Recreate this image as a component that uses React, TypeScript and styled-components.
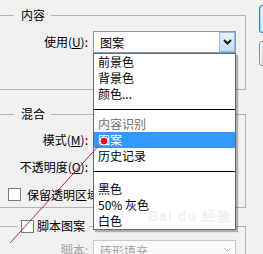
import { type ReactElement } from 'react';
import styled, { createGlobalStyle } from 'styled-components';

const GlobalStyle = createGlobalStyle`
  html, body {
    margin: 0;
    padding: 0;
  }
  body {
    background: #f0f0f0;
    font-family: "Noto Sans CJK SC", "Liberation Sans", sans-serif;
    font-size: 12px;
    color: #000;
  }
`;

const Dialog = styled.div`
  position: relative;
  display: flex;
  align-items: flex-start;
  gap: 13px;
  width: 263px;
  height: 254px;
  overflow: hidden;
`;

const Groups = styled.div`
  flex: none;
  width: 256px;
  margin-left: -10px;
  display: flex;
  flex-direction: column;
`;

const Group = styled.fieldset<{ $gap: number; $padTop: number; $padBottom: number }>`
  margin: ${(p) => p.$gap}px 0 0;
  padding: ${(p) => p.$padTop}px 0 ${(p) => p.$padBottom}px;
  border: 1px solid #b4b4b4;
  min-width: 0;
`;

const Legend = styled.legend<{ $indent: number }>`
  margin-left: ${(p) => p.$indent}px;
  padding: 0 6px 0 7px;
  line-height: 16px;
  white-space: nowrap;
`;

const CheckLegend = styled(Legend)`
  padding: 0 4px;
`;

const Rows = styled.div`
  display: grid;
  grid-template-columns: 97px 143px;
  column-gap: 5px;
  row-gap: 7px;
  align-items: center;
`;

const Label = styled.span<{ $disabled?: boolean }>`
  text-align: right;
  white-space: nowrap;
  line-height: 20px;
  color: ${(p) => (p.$disabled ? '#a3a3a3' : '#000')};
`;

const SelectWrap = styled.div`
  position: relative;
`;

const Select = styled.div<{ $disabled?: boolean }>`
  display: flex;
  align-items: center;
  height: ${(p) => (p.$disabled ? 20 : 22)}px;
  box-sizing: border-box;
  border: 1px solid ${(p) => (p.$disabled ? '#c9c9c9' : '#7f9db9')};
  background: ${(p) => (p.$disabled ? '#fafafa' : '#fff')};
  color: ${(p) => (p.$disabled ? '#a3a3a3' : '#000')};
  padding-left: 6px;
`;

const SelectText = styled.span`
  flex: 1;
  white-space: nowrap;
`;

const ArrowButton = styled.span<{ $disabled?: boolean }>`
  display: flex;
  align-items: center;
  justify-content: center;
  width: 16px;
  height: 20px;
  box-sizing: border-box;
  border: 1px solid ${(p) => (p.$disabled ? 'transparent' : '#9cb8dc')};
  background: ${(p) =>
    p.$disabled ? 'transparent' : 'linear-gradient(#e6f0fb, #c6dbf4)'};
`;

const PlainRow = styled.div`
  grid-column: 1 / -1;
  display: flex;
  align-items: center;
  gap: 3px;
  margin-left: 17px;
  height: 20px;
  white-space: nowrap;
`;

const CheckBox = styled.span`
  display: inline-block;
  width: 13px;
  height: 13px;
  box-sizing: border-box;
  border: 1px solid #7a7a7a;
  background: #fff;
  vertical-align: -2px;
  margin-right: 3px;
`;

const Menu = styled.div`
  position: absolute;
  top: 100%;
  left: 0;
  right: 0;
  z-index: 3;
  background: #fff;
  border: 1px solid #5f6a78;
  box-shadow: 2px 2px 1px rgba(0, 0, 0, 0.28);
`;

const MenuItem = styled.div<{ $active?: boolean; $header?: boolean }>`
  height: 16px;
  line-height: 16px;
  padding-left: 4px;
  white-space: nowrap;
  color: ${(p) => (p.$active ? '#fff' : p.$header ? '#6f6f6f' : '#000')};
  background: ${(p) => (p.$active ? '#3399ff' : 'transparent')};
`;

const MenuSeparator = styled.div<{ $after: number }>`
  height: 1px;
  margin: 7px 0 ${(p) => p.$after}px;
  background: #000;
`;

const Buttons = styled.div`
  flex: none;
  display: flex;
  flex-direction: column;
  gap: 8px;
  margin-top: 5px;
`;

const DialogButton = styled.button<{ $default?: boolean }>`
  width: 75px;
  height: ${(p) => (p.$default ? 28 : 25)}px;
  border: 1px solid ${(p) => (p.$default ? '#3c7fb1' : '#8a8a8a')};
  border-radius: 3px;
  background: ${(p) =>
    p.$default ? 'linear-gradient(#eaf6fd, #d3ecfc)' : 'linear-gradient(#f2f2f2, #dcdcdc)'};
  box-shadow: ${(p) => (p.$default ? 'inset 0 0 0 1px #9fd5f5' : 'inset 0 0 0 1px #fbfbfb')};
  font: inherit;
`;

const Watermark = styled.div`
  position: absolute;
  left: 148px;
  top: 208px;
  z-index: 4;
  font-family: "Liberation Sans", sans-serif;
  font-size: 14px;
  font-weight: bold;
  color: rgba(190, 190, 190, 0.22);
  letter-spacing: 1px;
  pointer-events: none;
  white-space: nowrap;
`;

const Annotation = styled.svg`
  position: absolute;
  left: 0;
  top: 0;
  z-index: 5;
  pointer-events: none;
`;

function Chevron({ disabled }: { disabled?: boolean }): ReactElement {
  return (
    <svg width="9" height="6" viewBox="0 0 9 6">
      <polyline
        points="1,1 4.5,4.5 8,1"
        fill="none"
        stroke={disabled ? '#b8b8b8' : '#1b1b1b'}
        strokeWidth={disabled ? 1 : 2}
      />
    </svg>
  );
}

export default function App(): ReactElement {
  return (
    <>
      <GlobalStyle />
      <Dialog>
        <Groups>
          <Group $gap={7} $padTop={8} $padBottom={36}>
            <Legend $indent={23}>内容</Legend>
            <Rows>
              <Label>
                使用(<u>U</u>):
              </Label>
              <SelectWrap>
                <Select>
                  <SelectText>图案</SelectText>
                  <ArrowButton>
                    <Chevron />
                  </ArrowButton>
                </Select>
                <Menu>
                  <MenuItem>前景色</MenuItem>
                  <MenuItem>背景色</MenuItem>
                  <MenuItem>颜色...</MenuItem>
                  <MenuSeparator $after={6} />
                  <MenuItem $header>内容识别</MenuItem>
                  <MenuItem $active>图案</MenuItem>
                  <MenuItem>历史记录</MenuItem>
                  <MenuSeparator $after={9} />
                  <MenuItem>黑色</MenuItem>
                  <MenuItem>50% 灰色</MenuItem>
                  <MenuItem>白色</MenuItem>
                </Menu>
              </SelectWrap>
            </Rows>
          </Group>

          <Group $gap={16} $padTop={8} $padBottom={3}>
            <Legend $indent={23}>混合</Legend>
            <Rows>
              <Label>
                模式(<u>M</u>):
              </Label>
              <span />
              <Label>
                不透明度(<u>O</u>):
              </Label>
              <span />
              <PlainRow>
                <CheckBox />
                保留透明区域
              </PlainRow>
            </Rows>
          </Group>

          <Group $gap={10} $padTop={6} $padBottom={4}>
            <CheckLegend $indent={26}>
              <CheckBox />
              脚本图案
            </CheckLegend>
            <Rows>
              <Label $disabled>脚本:</Label>
              <Select $disabled>
                <SelectText>砖形填充</SelectText>
                <ArrowButton $disabled>
                  <Chevron disabled />
                </ArrowButton>
              </Select>
            </Rows>
          </Group>
        </Groups>

        <Buttons>
          <DialogButton $default>确定</DialogButton>
          <DialogButton>取消</DialogButton>
        </Buttons>

        <Watermark>Bai du 经验</Watermark>

        <Annotation width="263" height="254" viewBox="0 0 263 254">
          <line x1="103" y1="141" x2="10" y2="243" stroke="#b2304f" strokeWidth="1" />
          <circle cx="104" cy="141" r="4" fill="#e3141c" stroke="#fff" strokeWidth="1" />
        </Annotation>
      </Dialog>
    </>
  );
}
